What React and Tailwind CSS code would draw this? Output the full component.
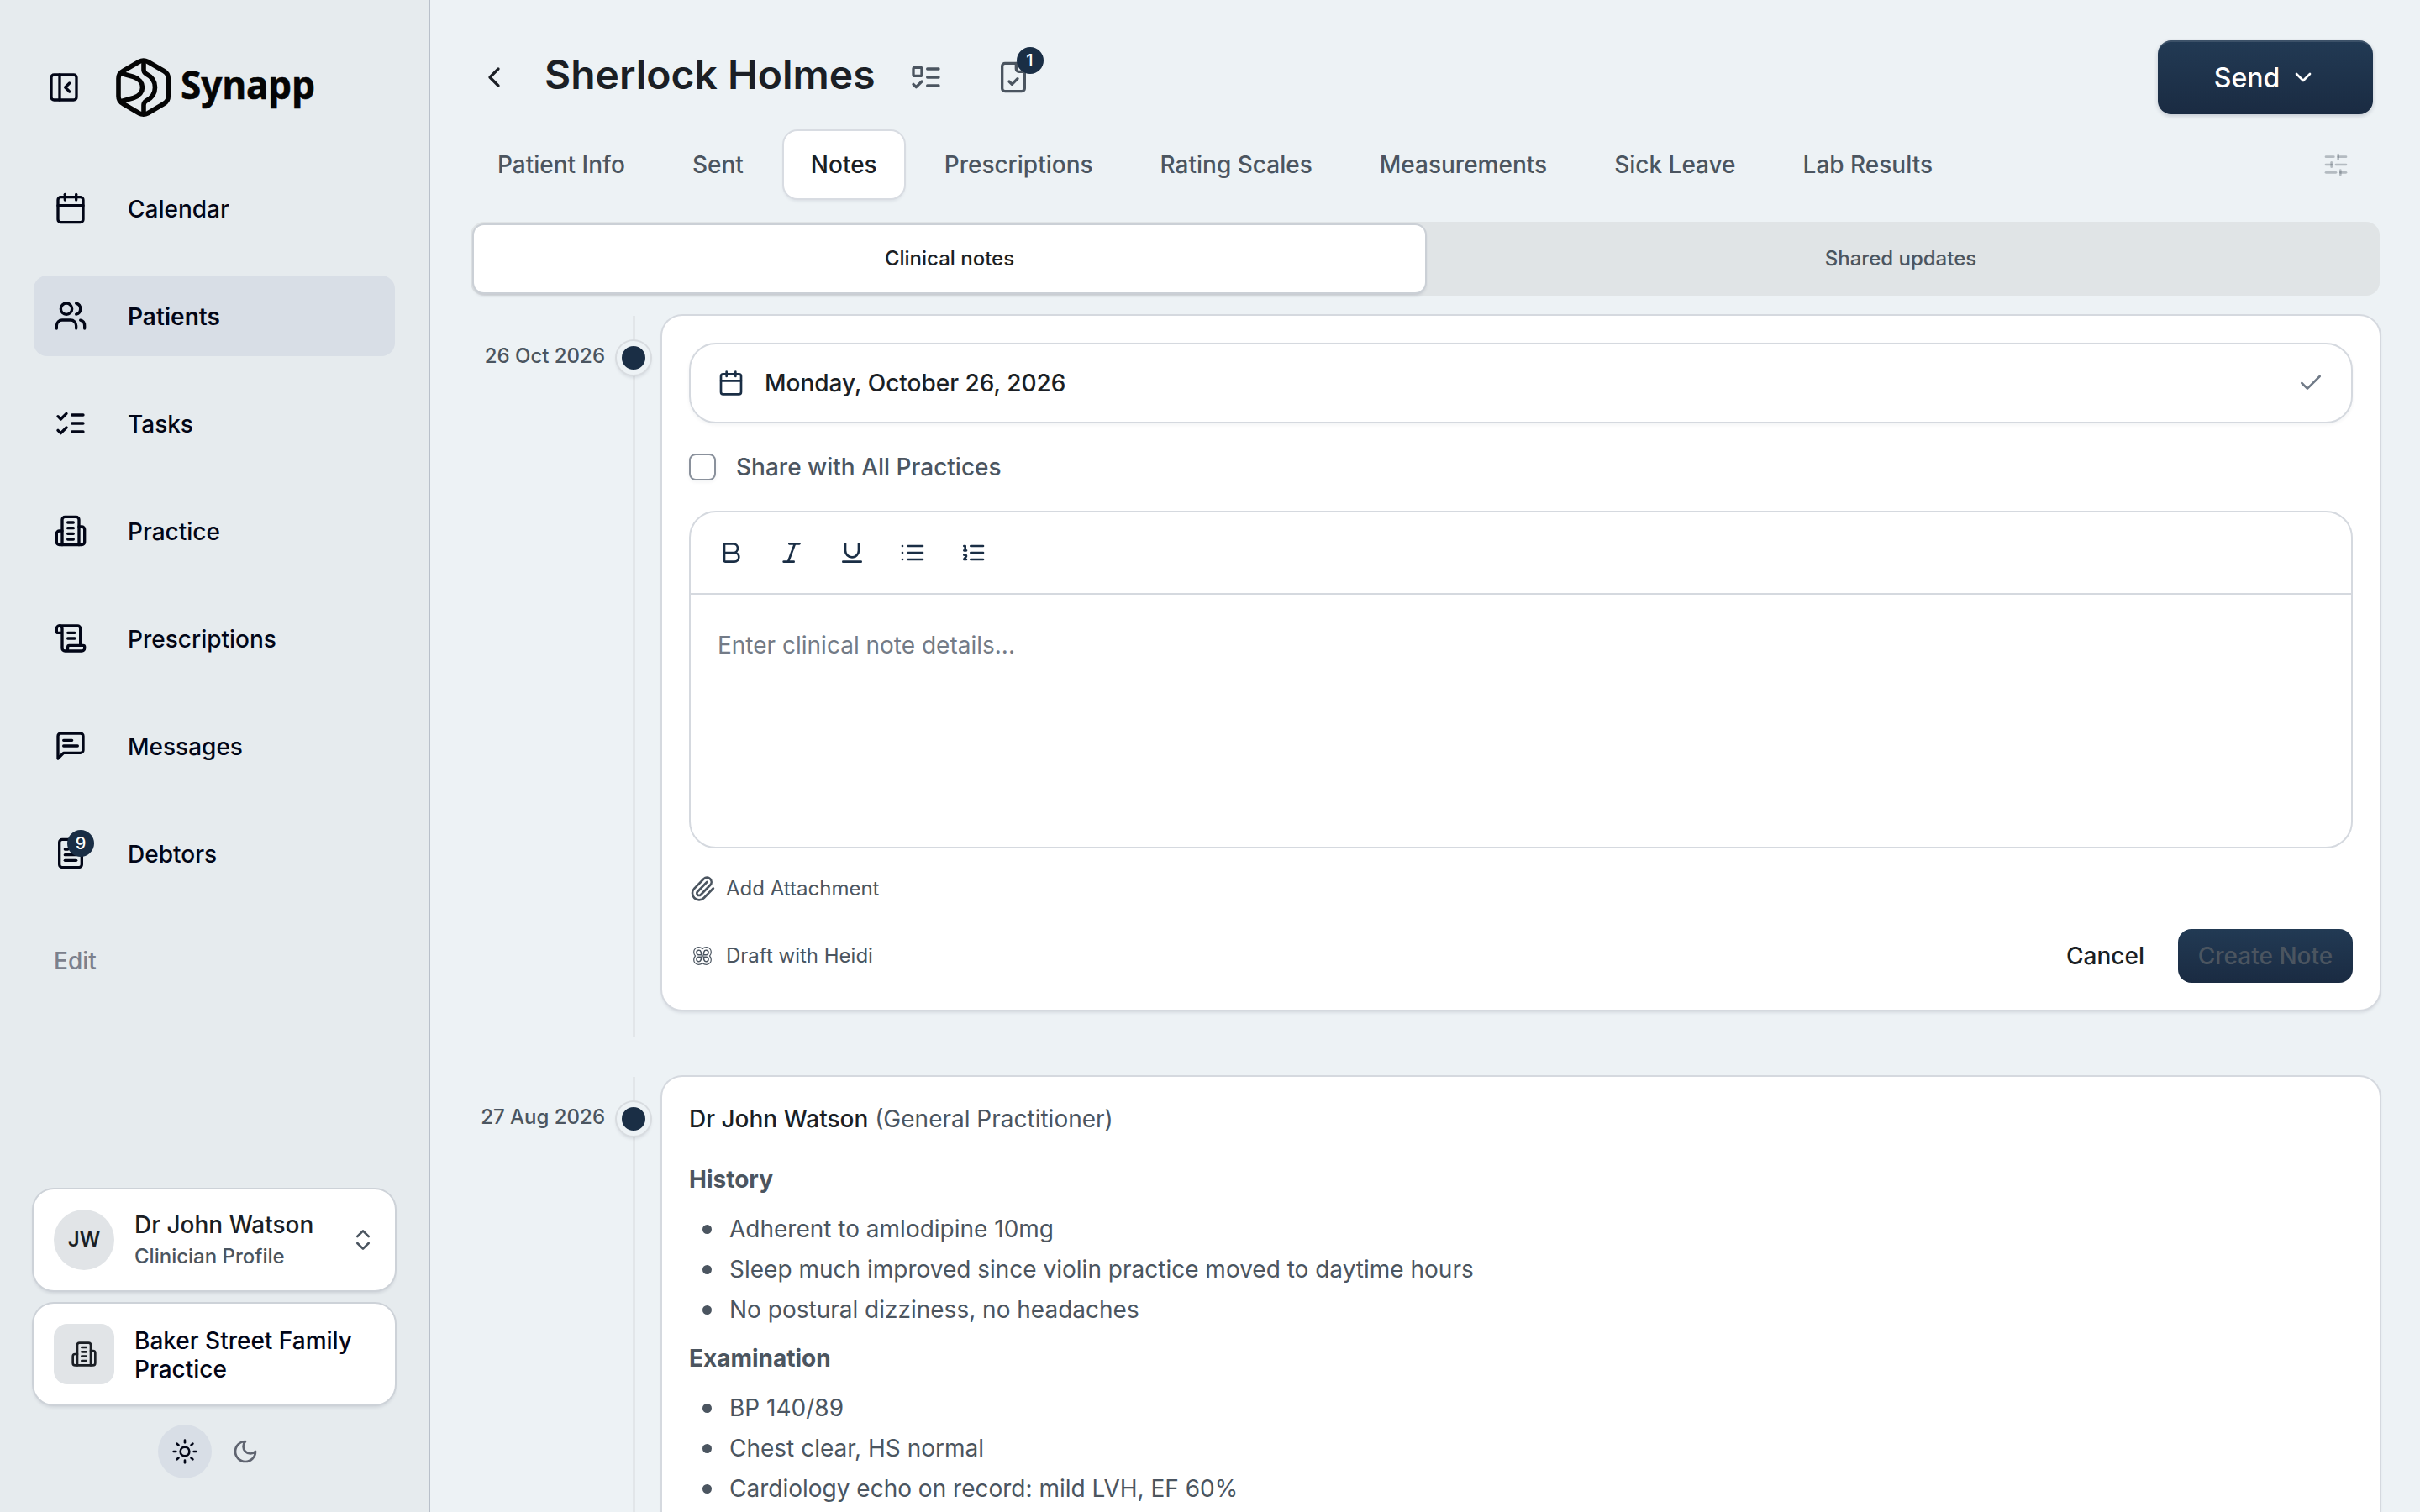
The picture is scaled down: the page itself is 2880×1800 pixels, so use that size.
import { useState } from 'react';
import clsx from 'clsx';
import {
  Bold,
  Calendar,
  Check,
  ChevronDown,
  ChevronLeft,
  ChevronsUpDown,
  FileText,
  Italic,
  PanelLeftClose,
  Paperclip,
  SlidersHorizontal,
  Sun,
  Underline,
} from 'lucide-react';

// Base for the icons we keep in the repo
const Icon = ({ className, children }) => (
  <svg
    viewBox="0 0 24 24"
    fill="none"
    stroke="currentColor"
    strokeWidth="2"
    strokeLinecap="round"
    strokeLinejoin="round"
    className={className}
  >
    {children}
  </svg>
);

const UsersIcon = (props) => (
  <Icon {...props}>
    <path d="M16 21v-2a4 4 0 0 0-4-4H6a4 4 0 0 0-4 4v2" />
    <circle cx="9" cy="7" r="4" />
    <path d="M22 21v-2a4 4 0 0 0-3-3.87" />
    <path d="M16 3.13a4 4 0 0 1 0 7.75" />
  </Icon>
);

const TasksIcon = (props) => (
  <Icon {...props}>
    <path d="m3 17 2 2 4-4" />
    <path d="m3 7 2 2 4-4" />
    <path d="M13 6h8M13 12h8M13 18h8" />
  </Icon>
);

const TodoIcon = (props) => (
  <Icon {...props}>
    <rect x="3" y="5" width="6" height="6" rx="1" />
    <path d="m3 17 2 2 4-4" />
    <path d="M13 6h8M13 12h8M13 18h8" />
  </Icon>
);

const BuildingIcon = (props) => (
  <Icon {...props}>
    <path d="M6 22V4a2 2 0 0 1 2-2h8a2 2 0 0 1 2 2v18Z" />
    <path d="M6 12H4a2 2 0 0 0-2 2v6a2 2 0 0 0 2 2h2" />
    <path d="M18 9h2a2 2 0 0 1 2 2v9a2 2 0 0 1-2 2h-2" />
    <path d="M10 6h4M10 10h4M10 14h4M10 18h4" />
  </Icon>
);

const ScrollIcon = (props) => (
  <Icon {...props}>
    <path d="M15 12h-5M15 8h-5" />
    <path d="M19 17V5a2 2 0 0 0-2-2H4" />
    <path d="M8 21h12a2 2 0 0 0 2-2v-1a1 1 0 0 0-1-1H11a1 1 0 0 0-1 1v1a2 2 0 1 1-4 0V5a2 2 0 1 0-4 0v2a1 1 0 0 0 1 1h3" />
  </Icon>
);

const MessageIcon = (props) => (
  <Icon {...props}>
    <path d="M21 15a2 2 0 0 1-2 2H7l-4 4V5a2 2 0 0 1 2-2h14a2 2 0 0 1 2 2z" />
    <path d="M13 8H7M17 12H7" />
  </Icon>
);

const FileCheckIcon = (props) => (
  <Icon {...props}>
    <path d="M15 2H6a2 2 0 0 0-2 2v16a2 2 0 0 0 2 2h12a2 2 0 0 0 2-2V7Z" />
    <path d="M14 2v4a2 2 0 0 0 2 2h4" />
    <path d="m9 15 2 2 4-4" />
  </Icon>
);

const ListIcon = (props) => (
  <Icon {...props}>
    <path d="M8 6h13M8 12h13M8 18h13M3 6h.01M3 12h.01M3 18h.01" />
  </Icon>
);

const ListOrderedIcon = (props) => (
  <Icon {...props}>
    <path d="M10 6h11M10 12h11M10 18h11" />
    <path d="M4 6h1v4M4 10h2M6 18H4c0-1 2-2 2-3s-1-1.5-2-1" />
  </Icon>
);

const MoonIcon = (props) => (
  <Icon {...props}>
    <path d="M12 3a6 6 0 0 0 9 9 9 9 0 1 1-9-9Z" />
  </Icon>
);

// Four-leaf knot
const HeidiIcon = ({ className }) => (
  <svg
    viewBox="0 0 22 22"
    fill="none"
    stroke="currentColor"
    strokeWidth="1.2"
    strokeLinejoin="round"
    className={className}
  >
    <path d="M11 2.500C9.500 1 8 .7 6.200.7A5.500 5.500 0 0 0 .7 6.200C.7 8 1 9.500 2.500 11C1 12.500.7 14 .7 15.800A5.500 5.500 0 0 0 6.200 21.300C8 21.300 9.500 21 11 19.500C12.500 21 14 21.300 15.800 21.300A5.500 5.500 0 0 0 21.300 15.800C21.300 14 21 12.500 19.500 11C21 9.500 21.300 8 21.300 6.200A5.500 5.500 0 0 0 15.800.7C14 .7 12.500 1 11 2.500Z" />
    <path
      strokeWidth="1.500"
      d="M9.700 9.700H6.500A2.700 2.700 0 1 1 9.200 6.200ZM12.300 9.700H15.500A2.700 2.700 0 1 0 12.800 6.200ZM9.700 12.300H6.500A2.700 2.700 0 1 0 9.200 15.800ZM12.300 12.300H15.500A2.700 2.700 0 1 1 12.800 15.800Z"
    />
    <path strokeWidth="1.500" d="M9.700 11H12.300" />
  </svg>
);

const Logo = () => (
  <div className="flex items-center">
    <svg viewBox="136 66 70 76" className="h-[76px] w-[70px]" fill="none" stroke="#050505" strokeWidth="5.6">
      <path d="M165.500 73.500Q170.700 70.500 176 73.500L195 84.500Q200.300 87.500 200.300 93.500V114.500Q200.300 120.500 195 123.500L176 134.700Q170.700 137.500 165.500 134.700L146.500 123.500Q141 120.500 141 114.500V93.500Q141 87.500 146.500 84.500Z" />
      <path d="M171 72V83Q171 86 174 88C188 95 188 113 174 120Q171 122 171 125V136" />
      <path d="M143 87L159 91.500C173 96 173 112 159 116.500L143 121" />
    </svg>
    <svg viewBox="0 0 172 76" className="ml-2 h-[76px] w-[172px]">
      <text
        x="1"
        y="51.5"
        textLength="160"
        lengthAdjust="spacingAndGlyphs"
        className="fill-[#050505] stroke-[#050505] stroke-[0.6px] font-['Noto_Sans',sans-serif] text-[46px] font-bold"
      >
        Synapp
      </text>
    </svg>
  </div>
);

const navItems = [
  { name: 'Calendar', icon: Calendar },
  { name: 'Patients', icon: UsersIcon },
  { name: 'Tasks', icon: TasksIcon },
  { name: 'Practice', icon: BuildingIcon },
  { name: 'Prescriptions', icon: ScrollIcon },
  { name: 'Messages', icon: MessageIcon },
  { name: 'Debtors', icon: FileText, badge: 9 },
];

const tabs = [
  'Patient Info',
  'Sent',
  'Notes',
  'Prescriptions',
  'Rating Scales',
  'Measurements',
  'Sick Leave',
  'Lab Results',
];

const toolbar = [Bold, Italic, Underline, ListIcon, ListOrderedIcon];

const noteSections = [
  {
    title: 'History',
    items: [
      'Adherent to amlodipine 10mg',
      'Sleep much improved since violin practice moved to daytime hours',
      'No postural dizziness, no headaches',
    ],
  },
  {
    title: 'Examination',
    items: ['BP 140/89', 'Chest clear, HS normal', 'Cardiology echo on record: mild LVH, EF 60%'],
  },
];

const Badge = ({ children, className }) => (
  <span
    className={clsx(
      'absolute flex h-8 w-8 items-center justify-center rounded-full bg-[#1a2e45] text-[20px] font-medium leading-none text-white',
      className
    )}
  >
    {children}
  </span>
);

function Sidebar() {
  const [active, setActive] = useState('Patients');

  return (
    <aside className="flex h-full w-[512px] shrink-0 flex-col border-r-2 border-[#b9c0ca] bg-[#e6ebee] px-10 text-[#020617]">
      <div className="flex items-center gap-10 pl-4 pt-[66px]">
        <PanelLeftClose className="h-10 w-10" />
        <Logo />
      </div>

      <nav className="mt-[58px] flex flex-col gap-8 text-[28px] font-medium">
        {navItems.map(({ name, icon: NavIcon, badge }) => (
          <button
            key={name}
            type="button"
            onClick={() => setActive(name)}
            className={clsx(
              'flex h-24 items-center gap-12 rounded-2xl px-6',
              active === name && 'bg-[#d8dee6] font-semibold'
            )}
          >
            <span className="relative">
              <NavIcon className="h-10 w-10" />
              {badge && <Badge className="-top-2 left-4">{badge}</Badge>}
            </span>
            <span className="pt-px">{name}</span>
          </button>
        ))}
        <button type="button" className="flex h-24 items-center px-6 text-[#7b808c]">
          Edit
        </button>
      </nav>

      <div className="mt-auto flex flex-col gap-4">
        <div className="flex h-[120px] items-center rounded-3xl bg-white px-6 shadow-[0_0_0_2px_#cdd2d8,0_3px_4px_rgba(20,30,60,0.14)]">
          <div className="flex h-[72px] w-[72px] items-center justify-center rounded-full bg-[#e1e4e7] text-[24px] font-semibold text-[#1b1f25]">
            JW
          </div>
          <div className="ml-6 flex-1">
            <p className="text-[28px] font-medium leading-[36px] text-[#1b1f25]">Dr John Watson</p>
            <p className="mt-1 text-[24px] font-medium leading-[32px] text-[#4b5560]">Clinician Profile</p>
          </div>
          <ChevronsUpDown className="-mr-0.5 h-8 w-8 text-[#4b5560]" />
        </div>
        <div className="flex h-[120px] items-center rounded-3xl bg-white px-6 shadow-[0_0_0_2px_#cdd2d8,0_3px_4px_rgba(20,30,60,0.14)]">
          <div className="flex h-[72px] w-[72px] items-center justify-center rounded-2xl bg-[#e1e4e7] text-[#1b1f25]">
            <BuildingIcon className="h-8 w-8" />
          </div>
          <p className="ml-6 flex-1 pt-0.5 text-[28px] font-medium leading-[34px]">Baker Street Family Practice</p>
        </div>
      </div>

      <div className="mb-10 mt-6 flex gap-2 pl-[148px]">
        <button type="button" className="flex h-16 w-16 items-center justify-center rounded-full bg-[#d8dee6]">
          <Sun className="h-8 w-8" />
        </button>
        <button type="button" className="flex h-16 w-16 items-center justify-center rounded-full text-[#5f6470]">
          <MoonIcon className="h-8 w-8" />
        </button>
      </div>
    </aside>
  );
}

const TimelineRow = ({ date, className, children }) => (
  <div className="flex">
    <div className="w-[160px] pt-8 text-right text-[24px] font-medium leading-[32px] text-[#4b5560]">
      {date}
    </div>
    <div className="relative ml-[12px] mr-[12px] flex w-11 flex-col items-center pt-[30px]">
      <div className="absolute inset-y-0 left-[21px] w-[3px] bg-[#e2e6e9]" />
      <div className="relative h-10 w-10 rounded-full border-[6px] border-[#edf2f5] bg-[#1a2e45] shadow-[0_0_0_2px_#d8dce0,0_3px_4px_rgba(20,30,60,0.14)]" />
    </div>
    <div className={clsx('flex-1', className)}>
      <div className="rounded-3xl bg-white p-8 shadow-[0_0_0_2px_#d5d9df,0_3px_4px_rgba(20,30,60,0.14)]">
        {children}
      </div>
    </div>
  </div>
);

function NoteForm() {
  const [share, setShare] = useState(false);

  return (
    <>
      <div className="flex h-24 items-center rounded-[32px] border-2 border-[#d5d9df] px-8 shadow-[0_2px_4px_rgba(20,30,60,0.05)]">
        <Calendar className="h-8 w-8 text-[#1a2e45]" />
        <span className="ml-6 flex-1 text-[28px] font-medium text-[#1b1f25]">Monday, October 26, 2026</span>
        <Check className="h-8 w-8 text-[#707a87]" />
      </div>

      <label className="mt-8 flex h-10 items-center gap-6">
        <input
          type="checkbox"
          checked={share}
          onChange={(e) => setShare(e.target.checked)}
          className="h-8 w-8 appearance-none rounded-lg border-2 border-[#8a919c] bg-white shadow-[0_2px_4px_rgba(20,30,60,0.05)]"
        />
        <span className="text-[28px] font-medium text-[#4b5560]">Share with All Practices</span>
      </label>

      <div className="mt-8 h-[402px] rounded-[32px] border-2 border-[#d5d9df]">
        <div className="flex h-[98px] items-center gap-10 border-b-2 border-[#d5d9df] px-8 text-[#1a2e45]">
          {toolbar.map((ToolIcon, i) => (
            <ToolIcon key={i} className="h-8 w-8" />
          ))}
        </div>
        <p className="px-8 pt-10 text-[28px] leading-[40px] text-[#737b87]">Enter clinical note details...</p>
      </div>

      <button type="button" className="mt-8 flex h-8 items-center gap-3 text-[24px] text-[#4b5560]">
        <Paperclip className="h-8 w-8" />
        Add Attachment
      </button>

      <div className="mt-8 flex h-16 items-center">
        <button type="button" className="flex items-center text-[24px] text-[#4b5560]">
          <HeidiIcon className="ml-[5px] mr-[17px] h-[22px] w-[22px]" />
          Draft with Heidi
        </button>
        <button type="button" className="ml-auto mr-10 text-[28px] font-medium text-[#1b1f25]">
          Cancel
        </button>
        <button
          type="button"
          disabled
          className="h-16 w-[208px] rounded-2xl bg-linear-to-b from-[#223a54] to-[#1a2b42] text-[28px] font-medium text-[#4b5560]"
        >
          Create Note
        </button>
      </div>
    </>
  );
}

export default function App() {
  const [tab, setTab] = useState('Notes');

  return (
    <div className="flex h-[1800px] w-[2880px] overflow-hidden bg-[#edf2f5] font-['Inter',sans-serif]">
      <Sidebar />

      <main className="flex min-w-0 flex-1 flex-col px-12">
        <header className="mt-12 flex h-[88px] shrink-0 items-center px-2">
          <ChevronLeft className="h-10 w-10 text-[#1b1f25]" />
          <h1 className="-mt-1.5 ml-10 text-[48px] font-semibold leading-none text-[#1b1f25]">Sherlock Holmes</h1>
          <TodoIcon className="ml-10 h-10 w-10 text-[#4b5560]" />
          <div className="relative ml-16">
            <FileCheckIcon className="h-10 w-10 text-[#4b5560]" />
            <Badge className="-top-4 left-6">1</Badge>
          </div>
          <button
            type="button"
            className="ml-auto flex h-[88px] w-64 items-center justify-center gap-3 rounded-2xl bg-linear-to-b from-[#223a54] to-[#1a2b42] text-[32px] font-medium text-white shadow-[0_2px_5px_rgba(20,30,60,0.2),inset_0_2px_0_rgba(255,255,255,0.12)]"
          >
            <span className="pt-0.5">Send</span>
            <ChevronDown className="h-8 w-8" />
          </button>
        </header>

        <div className="mt-5 flex h-20 shrink-0 items-center gap-4">
          {tabs.map((name) => (
            <button
              key={name}
              type="button"
              onClick={() => setTab(name)}
              className={clsx(
                'h-20 rounded-2xl px-8 text-[28px] font-medium',
                tab === name
                  ? 'bg-white text-[#1b1f25] shadow-[0_0_0_2px_#d8dce2,0_3px_4px_rgba(20,30,60,0.1)]'
                  : 'text-[#4b5560]'
              )}
            >
              {name}
            </button>
          ))}
          <SlidersHorizontal className="ml-auto mr-9 h-8 w-8 text-[#4b5560]/35" />
        </div>

        <div className="mt-7 grid h-[88px] shrink-0 grid-cols-2 rounded-2xl bg-[#e0e4e6] p-1 text-[24px] font-medium">
          <button
            type="button"
            className="rounded-xl bg-white text-[#1b1f25] shadow-[0_0_0_2px_#cbd0d6,0_3px_4px_rgba(20,30,60,0.18)]"
          >
            Clinical notes
          </button>
          <button type="button" className="text-[#4b5560]">
            Shared updates
          </button>
        </div>

        <div className="mt-6 flex flex-col gap-12">
          <TimelineRow date="26 Oct 2026" className="pb-8">
            <NoteForm />
          </TimelineRow>

          <TimelineRow date="27 Aug 2026">
            <p className="text-[28px] leading-[36px] text-[#4b5560]">
              <span className="font-medium text-[#1b1f25]">Dr John Watson</span> (General Practitioner)
            </p>
            <div className="mt-[30px] h-[460px] text-[28px] leading-[48px] text-[#4b5560]">
              {noteSections.map((section) => (
                <section key={section.title} className="mb-[10px]">
                  <h3 className="mb-[11px] font-bold">{section.title}</h3>
                  <ul className="pl-4">
                    {section.items.map((item) => (
                      <li key={item} className="flex items-center">
                        <span className="mr-[21px] h-[11px] w-[11px] rounded-full bg-[#4b5560]" />
                        {item}
                      </li>
                    ))}
                  </ul>
                </section>
              ))}
            </div>
          </TimelineRow>
        </div>
      </main>
    </div>
  );
}
